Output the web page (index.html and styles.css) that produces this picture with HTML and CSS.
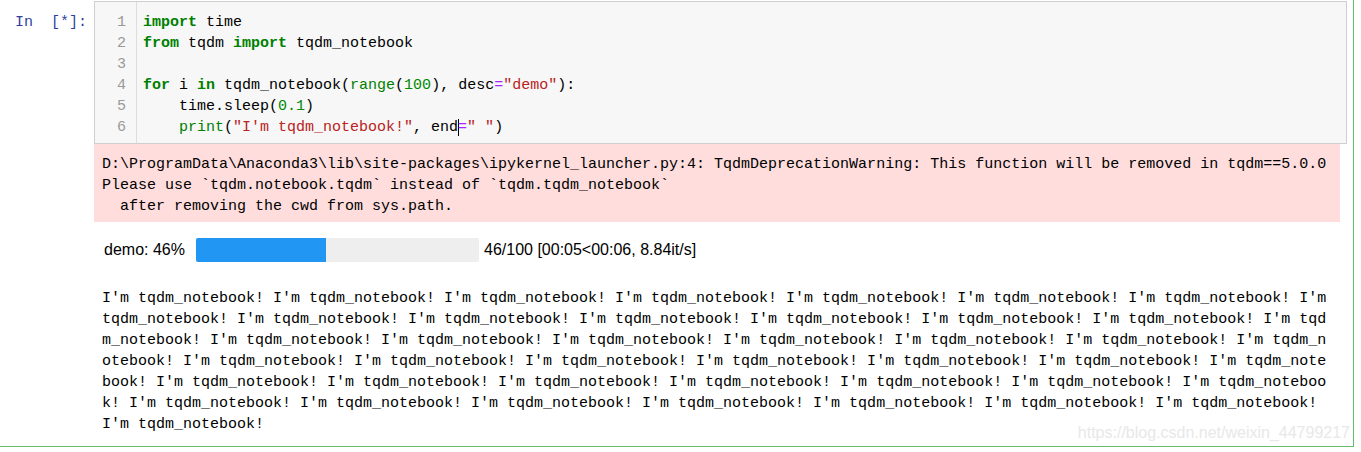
FILE: index.html
```html
<!DOCTYPE html>
<html>
<head>
<title>tqdm notebook demo</title>
<link rel="stylesheet" href="styles.css">
</head>
<body>

<div class="cell">
  <div class="inputRow">
    <div class="prompt">In  [*]:</div>
    <div class="inputArea">
      <pre class="gutter">1
2
3
4
5
6</pre>
      <pre class="code"><span class="kw">import</span> time
<span class="kw">from</span> tqdm <span class="kw">import</span> tqdm_notebook

<span class="kw">for</span> i <span class="kw">in</span> tqdm_notebook(<span class="bi">range</span>(<span class="num">100</span>), desc<span class="op">=</span><span class="str">"demo"</span>):
    time.sleep(<span class="num">0.1</span>)
    <span class="bi">print</span>(<span class="str">"I'm tqdm_notebook!"</span>, end<span class="op cursor">=</span><span class="str">" "</span>)</pre>
    </div>
  </div>

  <div class="outputs">
    <pre class="stderr">D:\ProgramData\Anaconda3\lib\site-packages\ipykernel_launcher.py:4: TqdmDeprecationWarning: This function will be removed in tqdm==5.0.0
Please use `tqdm.notebook.tqdm` instead of `tqdm.tqdm_notebook`
  after removing the cwd from sys.path.</pre>

    <div class="progress">
      <span class="pLabel">demo: 46%</span>
      <div class="pBar"><div class="pFill" style="width: 46%"></div></div>
      <span class="pText">46/100 [00:05&lt;00:06, 8.84it/s]</span>
    </div>

    <pre class="stream">I'm tqdm_notebook! I'm tqdm_notebook! I'm tqdm_notebook! I'm tqdm_notebook! I'm tqdm_notebook! I'm tqdm_notebook! I'm tqdm_notebook! I'm
tqdm_notebook! I'm tqdm_notebook! I'm tqdm_notebook! I'm tqdm_notebook! I'm tqdm_notebook! I'm tqdm_notebook! I'm tqdm_notebook! I'm tqd
m_notebook! I'm tqdm_notebook! I'm tqdm_notebook! I'm tqdm_notebook! I'm tqdm_notebook! I'm tqdm_notebook! I'm tqdm_notebook! I'm tqdm_n
otebook! I'm tqdm_notebook! I'm tqdm_notebook! I'm tqdm_notebook! I'm tqdm_notebook! I'm tqdm_notebook! I'm tqdm_notebook! I'm tqdm_note
book! I'm tqdm_notebook! I'm tqdm_notebook! I'm tqdm_notebook! I'm tqdm_notebook! I'm tqdm_notebook! I'm tqdm_notebook! I'm tqdm_noteboo
k! I'm tqdm_notebook! I'm tqdm_notebook! I'm tqdm_notebook! I'm tqdm_notebook! I'm tqdm_notebook! I'm tqdm_notebook! I'm tqdm_notebook! 
I'm tqdm_notebook!</pre>
  </div>
</div>

<div class="watermark">https://blog.csdn.net/weixin_44799217</div>

</body>
</html>
```

FILE: styles.css
```css
body {
  margin: 0;
  background-color: #FFFFFF;
  font-family: "Liberation Mono", "DejaVu Sans Mono", monospace;
  font-size: 15px;
  color: #000000;
}
pre {
  margin: 0;
  font-family: inherit;
  font-size: 15px;
  line-height: 21px;
}
.cell {
  width: 1354px;
  box-sizing: border-box;
  padding-top: 1px;
  padding-bottom: 11px;
  border-right: 1px solid #66BB6A;
  border-bottom: 1px solid #66BB6A;
}
.inputRow {
  display: flex;
}
.prompt {
  width: 94px;
  flex: none;
  box-sizing: border-box;
  padding-left: 15px;
  padding-top: 11px;
  line-height: 21px;
  white-space: pre;
  color: #303F9F;
}
.inputArea {
  display: flex;
  width: 1253px;
  box-sizing: border-box;
  border: 1px solid #CFCFCF;
  background-color: #F7F7F7;
}
.gutter {
  width: 42px;
  box-sizing: border-box;
  padding: 10px 10px 5px 0;
  text-align: right;
  color: #999999;
  border-right: 1px solid #DDDDDD;
}
.code {
  padding: 10px 6px 5px 6px;
}
.kw {
  color: #008000;
  font-weight: bold;
}
.bi {
  color: #008000;
}
.num {
  color: #008800;
}
.op {
  color: #AA22FF;
}
.str {
  color: #BA2121;
}
.cursor {
  box-shadow: inset 1px 0 0 #000000;
}
.outputs {
  padding-left: 94px;
}
.stderr {
  width: 1246px;
  box-sizing: border-box;
  background-color: #FFDDDD;
  padding: 10px 8px 5px 8px;
}
.progress {
  display: flex;
  align-items: center;
  height: 24px;
  margin-top: 16px;
  padding-left: 10px;
  font-family: "Liberation Sans", Arial, sans-serif;
  font-size: 16px;
}
.pLabel {
  width: 92px;
  flex: none;
}
.pBar {
  width: 283px;
  height: 24px;
  background-color: #EEEEEE;
  border-radius: 2px;
  overflow: hidden;
}
.pFill {
  height: 100%;
  background-color: #2196F3;
}
.pText {
  margin-left: 5px;
}
.stream {
  margin-top: 16px;
  padding: 10px 8px 0 8px;
}
.watermark {
  position: absolute;
  right: 11px;
  top: 424px;
  font-family: "Liberation Sans", Arial, sans-serif;
  font-size: 16px;
  color: #E8E8E8;
}
```
